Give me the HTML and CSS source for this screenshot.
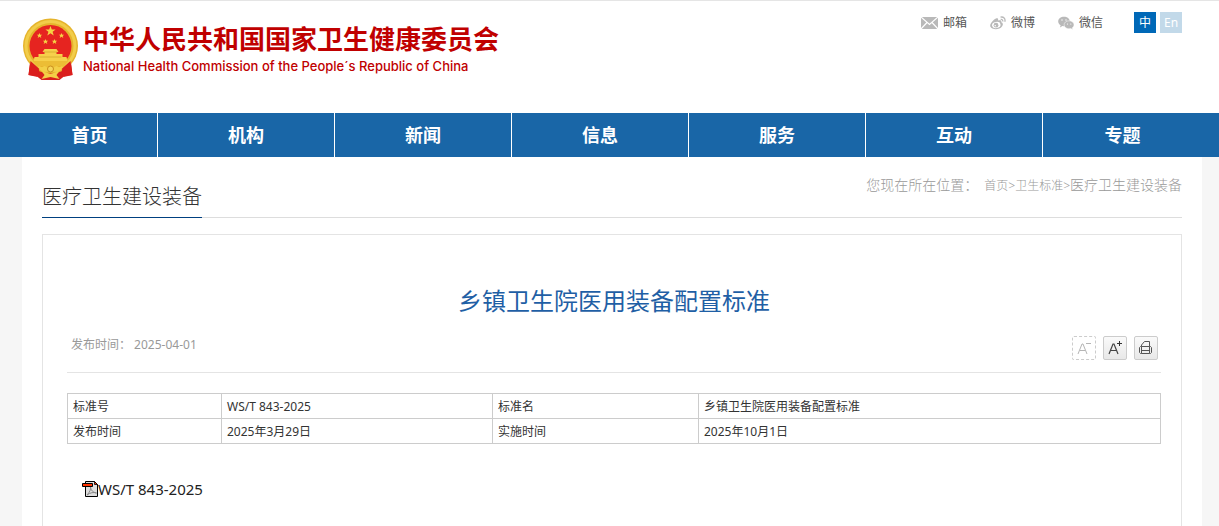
FILE: index.html
```html
<!DOCTYPE html>
<html lang="zh-CN">
<head>
    <meta charset="UTF-8">
    <meta name="viewport" content="width=device-width, initial-scale=1.0">
    <title>乡镇卫生院医用装备配置标准</title>
    <link rel="stylesheet" href="styles.css">
</head>
<body>
    <header class="header">
        <a class="logo" href="#">
            <svg class="emblem" viewBox="0 0 56 62" aria-hidden="true">
                <path d="M8 40l-2 17 8 1 5 4h18l5-4 8-1-2-17z" fill="#d8201c"/>
                <circle cx="28" cy="28" r="27.500" fill="#e6b42c"/>
                <circle cx="28" cy="28" r="24.500" fill="none" stroke="#f2cd4a" stroke-width="3"/>
                <circle cx="28" cy="28" r="21" fill="#e62420"/>
                <path d="M28 8l1.300 3.500h3.800l-3 2.300 1.100 3.700-3.200-2.200-3.200 2.200 1.100-3.700-3-2.300h3.800z" fill="#f6d344"/>
                <path id="star" d="M17 15l.8 1.800h1.900l-1.500 1.200.6 1.900-1.800-1.100-1.800 1.100.6-1.900-1.500-1.200h1.900z" fill="#f6d344"/>
                <use href="#star" x="22"/>
                <use href="#star" x="6" y="6"/>
                <use href="#star" x="15" y="6"/>
                <path d="M22 31h12l2 3h-2v2h6v3h4l1 4H11l1-4h4v-3h6v-2h-2z" fill="#f6d04b"/>
                <path d="M21 34h14M17 39h22" stroke="#c99a24" stroke-width=".6"/>
                <path d="M10 43h36l-5 6q-4-2-7 0-3 4-6 1-3 3-6-1-3-2-7 0z" fill="#ecbd35"/>
                <path d="M8 43l9 8-2 8-9-2zM48 43l-9 8 2 8 9-2z" fill="#db1e1d"/>
                <path d="M16 51l6-3 6 3 6-3 6 3-5 3-7-2-7 2z" fill="#f3cf46"/>
                <path d="M19 53l9 3 9-3-3 4 3 4-9-2-9 2 3-4z" fill="#f3cf46"/>
                <circle cx="28" cy="51" r="3" fill="#f6d65a" stroke="#c98d1d"/>
            </svg>
            <span class="logo-text">
                <span class="logo-cn">中华人民共和国国家卫生健康委员会</span>
                <span class="logo-en">National Health Commission of the People´s Republic of China</span>
            </span>
        </a>
        <div class="tools">
            <a class="tool" href="#">
                <svg width="17" height="12" viewBox="0 0 17 12" aria-hidden="true"><path d="M0 0h17v12H0z" fill="#b9b9b9"/><path d="M0 0l8.500 7.500L17 0M0 12l6-6.500M17 12l-6-6.500" fill="none" stroke="#fff" stroke-width="1.200"/></svg>
                邮箱
            </a>
            <a class="tool" href="#">
                <svg width="16" height="14" viewBox="0 0 16 14" aria-hidden="true"><path d="M6 2.500c1.500-.7 2.500 0 2 2 2.500-.8 4 0 3.200 1.800C13 7 13.500 8.500 12 10.500 9.500 14 2 14 .3 10.500-.5 8 3 4 6 2.500z" fill="#b9b9b9"/><ellipse cx="6.300" cy="9" rx="4.300" ry="3.100" fill="#fff" transform="rotate(-10 6 9)"/><circle cx="6" cy="9.200" r="2.400" fill="#b9b9b9"/><circle cx="5.200" cy="9.700" r=".8" fill="#fff"/><path d="M10.500 1.200c3-.8 5.200 1.500 4.300 4.600M10.700 3.500c1.500-.3 2.300.6 2 2" fill="none" stroke="#b9b9b9" stroke-width="1.300"/></svg>
                微博
            </a>
            <a class="tool" href="#">
                <svg width="16" height="14" viewBox="0 0 16 14" aria-hidden="true"><path d="M6 .8c3.200 0 5.800 2 5.800 4.700S9.200 10.200 6 10.200l-1.600-.2L2 11.500l.6-2.300C1 8.300.2 7 .2 5.500.2 2.800 2.800.8 6 .8z" fill="#b9b9b9"/><path d="M11 4.800c2.800 0 5 1.800 5 4 0 1.300-.7 2.300-1.700 3l.4 1.700-1.900-1-1.800.3c-2.700 0-4.900-1.800-4.900-4s2.200-4 4.900-4z" fill="#b9b9b9" stroke="#fff" stroke-width=".5"/><circle cx="4" cy="4" r=".7" fill="#fff"/><circle cx="8" cy="4" r=".7" fill="#fff"/><circle cx="9.500" cy="8" r=".6" fill="#fff"/><circle cx="12.800" cy="8" r=".6" fill="#fff"/></svg>
                微信
            </a>
            <div class="lang">
                <a class="lang-item active" href="#">中</a>
                <a class="lang-item" href="#">En</a>
            </div>
        </div>
    </header>

    <nav class="nav">
        <a href="#">首页</a>
        <a href="#">机构</a>
        <a href="#">新闻</a>
        <a href="#">信息</a>
        <a href="#">服务</a>
        <a href="#">互动</a>
        <a href="#">专题</a>
    </nav>

    <main class="main">
        <div class="crumb-bar">
            <h2 class="column-title">医疗卫生建设装备</h2>
            <div class="crumbs">您现在所在位置：<span class="crumb-links"><a href="#">首页</a>&gt;<a href="#">卫生标准</a>&gt;</span><a href="#">医疗卫生建设装备</a></div>
        </div>

        <article class="article">
            <h1 class="article-title">乡镇卫生院医用装备配置标准</h1>
            <div class="meta">
                <span class="date">发布时间：&nbsp;2025-04-01</span>
                <div class="actions">
                    <button class="action smaller" type="button" aria-label="缩小字号">
                        <svg width="24" height="24" viewBox="0 0 24 24" aria-hidden="true"><path d="M6 18l4-10h1l4 10M8 14.500h5M14 7.500h5" fill="none" stroke="#b5b5b5"/></svg>
                    </button>
                    <button class="action" type="button" aria-label="放大字号">
                        <svg width="24" height="24" viewBox="0 0 24 24" aria-hidden="true"><path d="M6 18l4-10h1l4 10M8 14.500h5" fill="none" stroke="#444" stroke-width="1.200"/><path d="M14 7.500h5M16.500 5v5" stroke="#333"/></svg>
                    </button>
                    <button class="action" type="button" aria-label="打印">
                        <svg width="24" height="24" viewBox="0 0 24 24" aria-hidden="true"><path d="M7.500 10.500V9l3-3.500h5v5M7.500 10.500h-1l-1 1v5l1 1h1m8-7h1l1 1v5l-1 1h-1M7.500 10.500h8v7h-8zM7.500 14.500h8" fill="none" stroke="#555"/></svg>
                    </button>
                </div>
            </div>

            <table class="info">
                <tr>
                    <th class="col-number" scope="row">标准号</th>
                    <td class="col-value">WS/T 843-2025</td>
                    <th class="col-name" scope="row">标准名</th>
                    <td>乡镇卫生院医用装备配置标准</td>
                </tr>
                <tr>
                    <th scope="row">发布时间</th>
                    <td>2025年3月29日</td>
                    <th scope="row">实施时间</th>
                    <td>2025年10月1日</td>
                </tr>
            </table>

            <a class="file" href="#">
                <svg width="16" height="16" viewBox="0 0 16 16" aria-hidden="true"><path d="M3.500.5h9l3 3v12h-12z" fill="#ddd" stroke="#000"/><path d="M12.500.5v3h3z" fill="#f30" stroke="#000" stroke-width=".8"/><path d="M5 14c3-3 4-6 3.500-8.500 0 4 3 6 6 6.500-3-1-6-.5-9.500 2z" fill="none" stroke="#888"/><path d="M.5 2.500h10v3H.5z" fill="#f30" stroke="#000"/></svg>WS/T 843-2025</a>
        </article>
    </main>
</body>
</html>
```

FILE: styles.css
```css
* {
    box-sizing: border-box;
}
body {
    margin: 0;
    min-height: 100vh;
    display: flex;
    flex-direction: column;
    background: #f6f6f6;
    color: #333;
    font: 12px/24px "Noto Sans", "Noto Sans CJK SC", sans-serif;
}
a {
    color: inherit;
    text-decoration: none;
}

/* header */
.header {
    display: flex;
    justify-content: space-between;
    align-items: flex-start;
    height: 113px;
    padding: 0 37px 0 22px;
    background: #fff;
    border-top: 1px solid #e5e5e5;
}
.logo {
    display: flex;
    gap: 4px;
    padding-top: 17px;
    color: #c00000;
    white-space: nowrap;
}
.emblem {
    width: 57px;
    height: 62px;
}
.logo-text {
    display: flex;
    flex-direction: column;
    padding-top: 3px;
}
.logo-cn {
    font: bold 26px/34px "Noto Sans CJK SC", sans-serif;
}
.logo-en {
    font: 500 13px/22px Inter, Arial, sans-serif;
}
.tools {
    display: flex;
    align-items: center;
    gap: 23px;
    padding-top: 11px;
    white-space: nowrap;
}
.tool {
    display: flex;
    align-items: center;
    gap: 5px;
    height: 21px;
    color: #555;
}
.lang {
    display: flex;
    gap: 4px;
    margin-left: 8px;
}
.lang-item {
    width: 22px;
    background: #c2d9e9;
    color: #fff;
    line-height: 21px;
    text-align: center;
}
.lang-item.active {
    background: #0068b7;
}

/* main nav */
.nav {
    display: flex;
    padding: 0 17px 0 22px;
    background: #1966a7;
}
.nav a {
    flex: 176;
    border-right: 1px solid #fff;
    color: #fff;
    font-size: 18px;
    font-weight: bold;
    line-height: 44px;
    text-align: center;
}
.nav a:first-child {
    flex: 135;
}
.nav a:last-child {
    flex: 159;
    border-right: 0;
}

/* content */
.main {
    flex: 1;
    display: flex;
    flex-direction: column;
    margin: 0 17px 0 22px;
    padding: 0 20px;
    background: #fff;
}
.crumb-bar {
    display: flex;
    justify-content: space-between;
    height: 61px;
    margin-bottom: 16px;
    border-bottom: 1px solid #ddd;
}
.column-title {
    height: 61px;
    margin: 0;
    padding-top: 20px;
    border-bottom: 1px solid #004080;
    font-size: 20px;
    font-weight: 300;
    line-height: 40px;
}
.crumbs {
    padding-top: 16px;
    color: #999;
    font-size: 14px;
    font-weight: 300;
}
.crumb-links {
    margin-left: 6px;
    font-size: 12px;
}
.article {
    flex: 1;
    padding: 48px 20px 24px 24px;
    border: 1px solid #e4e4e4;
    border-bottom: 0;
}
.article-title {
    margin: 0;
    color: #1f5fa5;
    font-size: 24px;
    font-weight: 400;
    line-height: 36px;
    text-align: center;
}
.meta {
    display: flex;
    justify-content: space-between;
    height: 54px;
    padding: 13px 3px 0 4px;
    border-bottom: 1px solid #e4e4e4;
    color: #999;
}
.date {
    line-height: 26px;
}
.actions {
    display: flex;
    gap: 7px;
    padding-top: 4px;
}
.action {
    width: 24px;
    height: 24px;
    display: flex;
    align-items: center;
    justify-content: center;
    padding: 0;
    border: 1px solid #ccc;
    border-radius: 2px;
    background: linear-gradient(#fafafa, #e8e8e8);
    cursor: pointer;
}
.action svg {
    flex-shrink: 0;
}
.action.smaller {
    border-style: dashed;
    background: #fff;
}
.info {
    width: 100%;
    margin-top: 20px;
    border-collapse: collapse;
    table-layout: fixed;
}
.info th,
.info td {
    height: 25px;
    padding: 1px 5px 0;
    border: 1px solid #ccc;
    font-weight: 400;
    line-height: 23px;
    text-align: left;
}
.info .col-number { width: 154px; }
.info .col-value { width: 271px; }
.info .col-name { width: 206px; }
.file {
    display: flex;
    align-items: center;
    margin: 33px 15px 0;
    color: #222;
    font-size: 15px;
}
```
